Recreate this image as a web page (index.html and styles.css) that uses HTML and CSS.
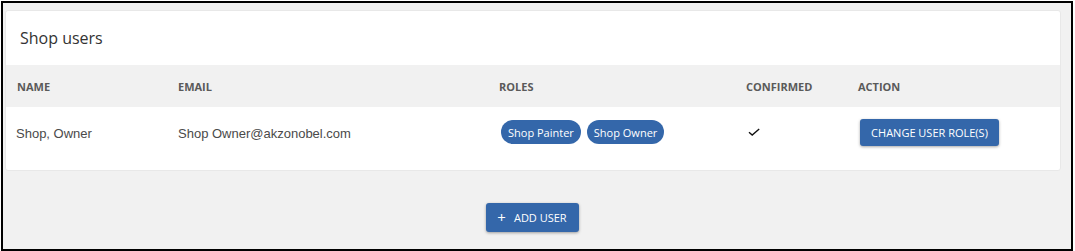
FILE: index.html
```html
<!DOCTYPE html>
<html lang="en">
<head>
<meta charset="utf-8">
<title>Shop users</title>
<link rel="stylesheet" href="styles.css">
</head>
<body>
<div class="frame">
  <section class="card">
    <header class="card-header">Shop users</header>
    <div class="grid head-row">
      <div class="cell">Name</div>
      <div class="cell">Email</div>
      <div class="cell">Roles</div>
      <div class="cell">Confirmed</div>
      <div class="cell">Action</div>
    </div>
    <div class="grid body-row">
      <div class="cell text">Shop, Owner</div>
      <div class="cell text">Shop Owner@akzonobel.com</div>
      <div class="cell roles">
        <span class="pill">Shop Painter</span>
        <span class="pill">Shop Owner</span>
      </div>
      <div class="cell check">
        <svg width="12" height="8" viewBox="0 0 12 8"><path d="M1 4.2 L4.2 7 L11.2 1" fill="none" stroke="#111" stroke-width="1.4"/></svg>
      </div>
      <div class="cell">
        <button class="btn btn-change">Change user role(s)</button>
      </div>
    </div>
  </section>
  <div class="footer">
    <button class="btn btn-add"><span class="plus">+</span>Add user</button>
  </div>
</div>
</body>
</html>
```

FILE: styles.css
```css
html, body {
  margin: 0;
  padding: 0;
  background: #fff;
}

.frame {
  margin: 1px;
  width: 1072px;
  height: 250px;
  box-sizing: border-box;
  border: 2px solid #000;
  background: #f1f1f1;
  padding: 7px 10px 0 2px;
  font-family: "Open Sans", sans-serif;
}

.card {
  width: 1056px;
  height: 161px;
  box-sizing: border-box;
  background: #fff;
  border: 1px solid #e8e8e8;
  border-radius: 3px;
  display: flex;
  flex-direction: column;
}

.card-header {
  height: 54px;
  display: flex;
  align-items: center;
  padding-left: 14px;
  font-size: 16px;
  color: #333;
}

.grid {
  display: grid;
  grid-template-columns: 161px 321px 247px 112px 1fr;
}

.head-row {
  height: 42px;
  background: #f1f1f1;
  align-items: center;
  font-size: 11px;
  font-weight: 700;
  color: #5a5a5a;
  text-transform: uppercase;
}

.head-row .cell {
  padding-left: 11px;
}

.head-row .cell:first-child {
  padding-left: 11px;
}

.body-row {
  flex: 1;
  align-items: center;
  padding: 11px 0 24px;
}

.body-row .cell {
  padding-left: 11px;
  display: flex;
  align-items: center;
}

.body-row .text {
  font-family: "Liberation Sans", Arial, sans-serif;
  font-size: 13px;
  color: #4a4a4a;
  padding-top: 3px;
}

.body-row .text:first-child {
  padding-left: 10px;
}

.roles {
  gap: 6px;
}

.roles .pill:first-child {
  margin-left: 2px;
}

.pill {
  display: inline-flex;
  align-items: center;
  height: 24px;
  padding: 0 7px;
  border-radius: 12px;
  background: #3467aa;
  color: #fff;
  font-size: 11px;
}

.check svg {
  margin-left: 2px;
}

.btn {
  border: none;
  border-radius: 3px;
  background: #3467aa;
  color: #fff;
  font-family: "Open Sans", sans-serif;
  font-size: 11px;
  text-transform: uppercase;
  box-shadow: 0 1px 3px rgba(0, 0, 0, 0.35);
  cursor: pointer;
}

.btn-change {
  margin-left: 2px;
  width: 139px;
  height: 27px;
  padding: 0;
}

.footer {
  width: 1054px;
  display: flex;
  justify-content: center;
  padding-top: 32px;
}

.btn-add {
  width: 93px;
  height: 29px;
  padding: 0;
  display: flex;
  align-items: center;
  justify-content: center;
}

.plus {
  font-size: 15px;
  margin-right: 8px;
  line-height: 1;
}
```
